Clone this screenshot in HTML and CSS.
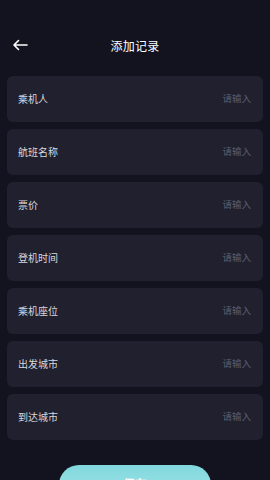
FILE: index.html
```html
<!DOCTYPE html>
<html lang="zh">
<head>
<meta charset="utf-8">
<link rel="stylesheet" href="styles.css">
</head>
<body>
<div class="page">
  <header class="header">
    <svg class="back" width="16" height="12" viewBox="0 0 16 12"><path d="M15 6H2M6.5 1.5L2 6l4.5 4.5" fill="none" stroke="#fff" stroke-width="1.6" stroke-linecap="round" stroke-linejoin="round"/></svg>
    <div class="title">添加记录</div>
  </header>
  <div class="list">
    <div class="row"><span class="label">乘机人</span><span class="ph">请输入</span></div>
    <div class="row"><span class="label">航班名称</span><span class="ph">请输入</span></div>
    <div class="row"><span class="label">票价</span><span class="ph">请输入</span></div>
    <div class="row"><span class="label">登机时间</span><span class="ph">请输入</span></div>
    <div class="row"><span class="label">乘机座位</span><span class="ph">请输入</span></div>
    <div class="row"><span class="label">出发城市</span><span class="ph">请输入</span></div>
    <div class="row"><span class="label">到达城市</span><span class="ph">请输入</span></div>
  </div>
  <div class="btn-wrap"><div class="btn">保存</div></div>
</div>
</body>
</html>
```
FILE: styles.css
```css
html, body {
  margin: 0;
  padding: 0;
  background: #13131f;
  font-family: "Noto Sans CJK SC", "Noto Sans", sans-serif;
}
.page {
  width: 270px;
  height: 480px;
  overflow: hidden;
}
.header {
  position: relative;
  height: 34px;
  padding-top: 28px;
  padding-bottom: 14px;
  display: flex;
  align-items: center;
  justify-content: center;
}
.back {
  position: absolute;
  left: 12px;
  top: 39px;
}
.title {
  color: #ffffff;
  font-size: 12px;
  letter-spacing: 0.3px;
}
.list {
  display: flex;
  flex-direction: column;
  gap: 7px;
  padding: 0 7px;
}
.row {
  height: 46px;
  background: #20202f;
  border-radius: 6px;
  display: flex;
  align-items: center;
  justify-content: space-between;
  padding: 0 12px 2px 11px;
  box-sizing: border-box;
}
.label {
  color: #d8d8df;
  font-size: 10px;
}
.ph {
  color: #5c5d6b;
  font-size: 9.5px;
}
.btn-wrap {
  display: flex;
  justify-content: center;
  padding-top: 25px;
}
.btn {
  width: 152px;
  height: 40px;
  border-radius: 20px;
  background: linear-gradient(180deg, #81d8dd, #a6e6ea);
  color: #ffffff;
  font-size: 12px;
  font-weight: bold;
  display: flex;
  justify-content: center;
  padding-top: 10px;
  box-sizing: border-box;
}
```
